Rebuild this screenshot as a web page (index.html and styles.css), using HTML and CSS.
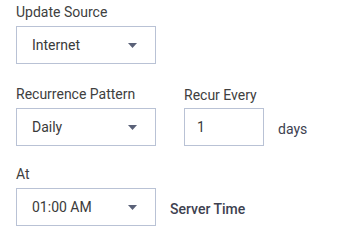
FILE: index.html
```html
<!DOCTYPE html>
<html>
<head>
<meta charset="utf-8">
<link rel="stylesheet" href="styles.css">
</head>
<body>
<div class="form">
  <div class="field row-first">
    <div class="label">Update Source</div>
    <div class="select">
      <span class="value">Internet</span>
      <svg class="caret" width="9" height="5" viewBox="0 0 9 5"><path d="M0 0H9L4.5 5Z"/></svg>
    </div>
  </div>
  <div class="row row-second">
    <div class="field">
      <div class="label">Recurrence Pattern</div>
      <div class="select">
        <span class="value">Daily</span>
        <svg class="caret" width="9" height="5" viewBox="0 0 9 5"><path d="M0 0H9L4.5 5Z"/></svg>
      </div>
    </div>
    <div class="field recur">
      <div class="label">Recur Every</div>
      <div class="inline">
        <div class="input"><span class="value">1</span></div>
        <span class="suffix">days</span>
      </div>
    </div>
  </div>
  <div class="field row-third">
    <div class="label">At</div>
    <div class="inline">
      <div class="select">
        <span class="value">01:00 AM</span>
        <svg class="caret" width="9" height="5" viewBox="0 0 9 5"><path d="M0 0H9L4.5 5Z"/></svg>
      </div>
      <span class="suffix strong">Server Time</span>
    </div>
  </div>
</div>
</body>
</html>
```
FILE: styles.css
```css
html, body {
  margin: 0;
  padding: 0;
  background: #ffffff;
}
.form {
  padding: 4px 0 0 16px;
  font-family: Roboto, "Liberation Sans", sans-serif;
  font-size: 14px;
  line-height: 16px;
  color: #3a3a3a;
}
.field {
  display: flex;
  flex-direction: column;
}
.row {
  display: flex;
  align-items: flex-start;
}
.row-second {
  margin-top: 22px;
}
.row-third {
  margin-top: 20px;
}
.label {
  color: #404040;
  margin-bottom: 6px;
}
.recur {
  margin-left: 28px;
}
.recur .label {
  padding-top: 1px;
  margin-bottom: 5px;
}
.select, .input {
  box-sizing: border-box;
  height: 38px;
  border: 1px solid #b9c2d5;
  background: #fff;
  display: flex;
  align-items: center;
}
.select {
  width: 140px;
  justify-content: space-between;
  padding: 0 18px 0 15px;
}
.input {
  width: 80px;
  padding: 0 0 0 12px;
}
.value {
  color: #3a3a3a;
}
.caret {
  display: block;
  fill: #5a6178;
}
.inline {
  display: flex;
  align-items: center;
}
.suffix {
  padding-top: 3px;
  margin-left: 14px;
  color: #3d4150;
}
.strong {
  margin-left: 14px;
  font-weight: 500;
}
```
